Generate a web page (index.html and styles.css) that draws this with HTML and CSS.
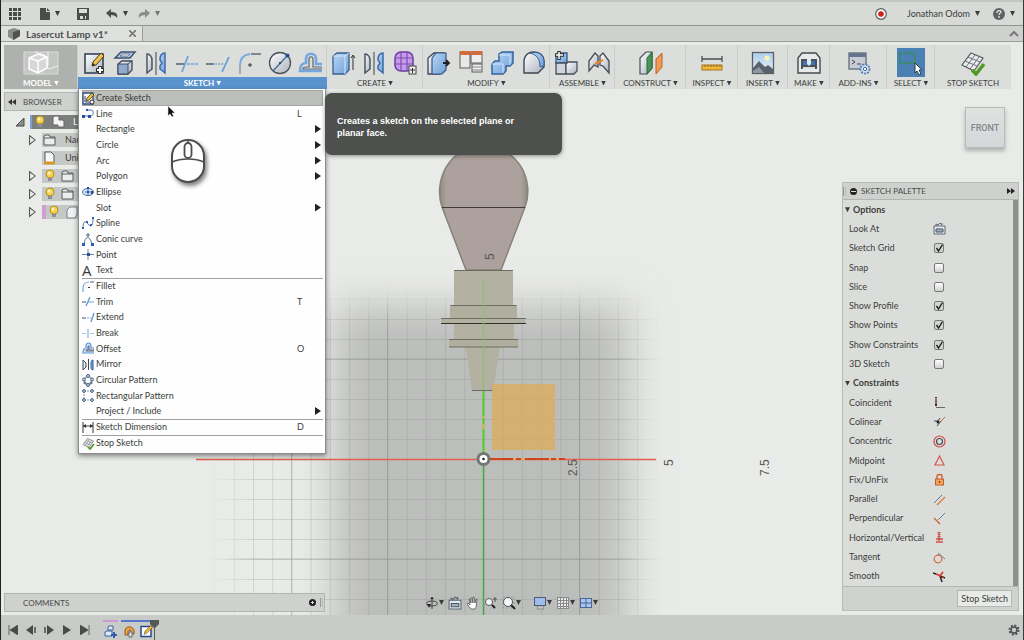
FILE: index.html
```html
<!DOCTYPE html>
<html lang="en">
<head>
<meta charset="utf-8">
<title>Lasercut Lamp v1*</title>
<link rel="stylesheet" href="styles.css">
</head>
<body>
<svg class="defs" aria-hidden="true">
  <defs>
    <linearGradient id="blue" x1="0" y1="0" x2="1" y2="1"><stop offset="0" stop-color="#b9d6f5"/><stop offset="1" stop-color="#6f9fd8"/></linearGradient>
    <linearGradient id="pale" x1="0" y1="0" x2="1" y2="1"><stop offset="0" stop-color="#ffffff"/><stop offset="1" stop-color="#aab2bd"/></linearGradient>
    <linearGradient id="sky" x1="0" y1="0" x2="0" y2="1"><stop offset="0" stop-color="#a9cdee"/><stop offset="1" stop-color="#eef3ee"/></linearGradient>
  </defs>
  <symbol id="i-sketch" viewBox="0 0 26 26"><rect x="4" y="4" width="18" height="19" fill="url(#pale)" stroke="#35435a" stroke-width="1.600"/><path d="M11 16l1-4 8-9 3 3-8 9z" fill="#efc24b" stroke="#4a3d1c"/><path d="M11 16l1-3 2 2z" fill="#222"/><path d="M19 16v8M15 20h8" stroke="#333" stroke-width="4"/><path d="M19 17v6M16 20h6" stroke="#fff" stroke-width="2"/></symbol>
  <symbol id="i-extrude" viewBox="0 0 26 26"><path d="M9 2h14l-5 6H3z" fill="#a9c9ee" stroke="#44536a" stroke-width="1.5"/><path d="M11 4h7l-2 2H8z" fill="#fff" stroke="#44536a" stroke-width=".7"/><path d="M6 14l4-3h10v9l-4 4H6z" fill="url(#pale)" stroke="#3d485a" stroke-width="1.3"/><path d="M6 14h10v10H6z" fill="#8fa9cf" stroke="#3d485a"/><path d="M16 14l4-3" stroke="#3d485a"/></symbol>
  <symbol id="i-mirror" viewBox="0 0 26 26"><path d="M4 4c3 0 5 3 5 6v9l-5 4z" fill="url(#pale)" stroke="#4b5565" stroke-width="1.5"/><path d="M13 2v23" stroke="#555c66" stroke-width="1.2"/><path d="M22 3c-4 0-5 3-5 7l2 3-2 3v3l5 4z" fill="url(#blue)" stroke="#3d6ca8" stroke-width="1.5"/></symbol>
  <symbol id="i-trim" viewBox="0 0 26 26"><path d="M2 14h9" stroke="#475568" stroke-width="1.4"/><path d="M13 14h11" stroke="#6fa3dc" stroke-width="1.6" stroke-dasharray="3 1"/><path d="M14 6L8 22" stroke="#6fa3dc" stroke-width="1.8"/></symbol>
  <symbol id="i-extend" viewBox="0 0 26 26"><path d="M1 14h8" stroke="#475568" stroke-width="1.4"/><path d="M10 14h9" stroke="#6fa3dc" stroke-width="1.5" stroke-dasharray="2 1"/><path d="M24 7l-7 15" stroke="#6fa3dc" stroke-width="1.8"/></symbol>
  <symbol id="i-fillet" viewBox="0 0 26 26"><path d="M15 4h10" stroke="#59616b" stroke-width="1.4"/><path d="M14 4C7 5 4 9 4 15" fill="none" stroke="#7aabe0" stroke-width="2"/><path d="M4 15v9" stroke="#8a929c" stroke-width="1.4"/><path d="M12 15h4M14 13v4" stroke="#333"/></symbol>
  <symbol id="i-circle" viewBox="0 0 26 26"><circle cx="13" cy="13" r="10.5" fill="url(#pale)" stroke="#4b515a" stroke-width="1.3"/><path d="M6 21L20 6" stroke="#4a6e9f" stroke-width="1.4"/><circle cx="20.500" cy="5.500" r="2" fill="#274c9c"/><circle cx="13" cy="13" r="1" fill="#333"/></symbol>
  <symbol id="i-offset" viewBox="0 0 26 26"><path d="M24 14h-6V9c0-7-10-7-10 0v4c-4 0-6 3-6 8h22" fill="none" stroke="#74a7e2" stroke-width="2.600"/><path d="M24 17h-9V9c0-3-4-3-4 0v8H8c-2 0-3 1-3 2h19" fill="#dcdedb" stroke="#5b6470" stroke-width="1.200"/></symbol>
  <symbol id="i-box" viewBox="0 0 26 26"><path d="M3 6l4-3h12v17l-4 4H3z" fill="url(#blue)" stroke="#3b5e8c" stroke-width="1.300"/><path d="M3 6h12v18M15 6l4-3" fill="none" stroke="#dbeafa"/><path d="M23 20V6M21 8l2-3 2 3" fill="none" stroke="#333"/></symbol>
  <symbol id="i-form" viewBox="0 0 26 26"><rect x="3" y="2" width="18" height="19" rx="6" fill="#c59bea" stroke="#6c3ba0" stroke-width="1.500"/><path d="M9 2v19M15 2v19M3 8h18M3 14h18" stroke="#7d4fb4" stroke-width="1.200"/><rect x="17" y="16" width="7" height="8" fill="#eee" stroke="#444"/><path d="M18 20h5M20.500 18v5" stroke="#333"/></symbol>
  <symbol id="i-press" viewBox="0 0 26 26"><path d="M2 8l6-5h10v18l-4 3H2z" fill="url(#pale)" stroke="#3d485a" stroke-width="1.300"/><path d="M6 8l4-5h10v17l-4 4H6z" fill="url(#blue)" stroke="#35577f" stroke-width="1.200"/><path d="M17 13h5M20 10l3 3-3 3" fill="none" stroke="#222" stroke-width="1.800"/></symbol>
  <symbol id="i-table" viewBox="0 0 26 26"><rect x="2" y="2" width="10" height="16" fill="#e8e8e8" stroke="#5f5a58"/><path d="M2 3h10" stroke="#d56a3b" stroke-width="4"/><rect x="13" y="2" width="11" height="11" fill="#eee" stroke="#5f5a58"/><rect x="14" y="14" width="10" height="8" fill="#eee" stroke="#5f5a58"/><path d="M13 3h11" stroke="#d56a3b" stroke-width="4"/><path d="M14 17h9M14 20h9" stroke="#84878a" stroke-width="1.200"/></symbol>
  <symbol id="i-combine" viewBox="0 0 26 26"><path d="M10 4l3-2h11v11l-3 3h-4v5l-3 3H3V14l3-3h4z" fill="url(#blue)" stroke="#3563a0" stroke-width="1.500"/><path d="M3 14h11v9M10 5h11v10" fill="none" stroke="#d6e6f8"/></symbol>
  <symbol id="i-shell" viewBox="0 0 26 26"><path d="M3 23V10c1-5 5-8 10-8 6 0 10 4 10 9v6l-6 6z" fill="url(#pale)" stroke="#3d4654" stroke-width="1.400"/><path d="M9 3c8-2 14 1 14 9v4l-4 1c0-8-3-12-10-14z" fill="url(#blue)" stroke="#355f94"/></symbol>
  <symbol id="i-newcomp" viewBox="0 0 26 26"><path d="M3 13V5l3-2h8v10z" fill="url(#blue)" stroke="#31598e" stroke-width="1.300"/><path d="M3 24V13h10v11z" fill="#cdd5df" stroke="#4a4f58" stroke-width="1.300"/><path d="M13 24V14l2-2h9v9l-3 3z" fill="url(#pale)" stroke="#4a4f58" stroke-width="1.300"/><path d="M6 1v9M2 5h9" stroke="#333" stroke-width="3.500"/><path d="M6 2v7M3 5h7" stroke="#fff" stroke-width="1.500"/></symbol>
  <symbol id="i-joint" viewBox="0 0 26 26"><path d="M3 21V11l6-8 3 3v11l-4-2z" fill="url(#pale)" stroke="#454b54" stroke-width="1.300"/><path d="M14 15V6l3-3 6 8v12l-6-7z" fill="url(#pale)" stroke="#454b54" stroke-width="1.300"/><path d="M9 14l8-4" stroke="#e4852d" stroke-width="2"/></symbol>
  <symbol id="i-plane" viewBox="0 0 26 26"><path d="M2 8l6-6h6v16l-5 6H2z" fill="url(#pale)" stroke="#4a4f50" stroke-width="1.200"/><path d="M9 8l5-6v16l-5 6z" fill="#4a9457" stroke="#2f6b3c"/><path d="M18 9l6-6v14l-6 7z" fill="#ee9b56" stroke="#b9602a"/></symbol>
  <symbol id="i-ruler" viewBox="0 0 26 26"><path d="M3 9h20M3 6v6M23 6v6" stroke="#4b4f53" stroke-width="1.300"/><rect x="3" y="15" width="20" height="5" fill="#f1b73a" stroke="#a8741a"/><path d="M6 15v2M9 15v2M12 15v2M15 15v2M18 15v2M21 15v2" stroke="#8b641d"/></symbol>
  <symbol id="i-image" viewBox="0 0 26 26"><rect x="2.500" y="2.500" width="21" height="21" fill="url(#sky)" stroke="#5a6066" stroke-width="1.300"/><circle cx="17" cy="8" r="2.500" fill="#fff4b5"/><path d="M3 18l6-7 6 6 3-2 5 4v4H3z" fill="#59616d"/><path d="M3 21l6-4 5 6H3z" fill="#8f979f"/></symbol>
  <symbol id="i-make" viewBox="0 0 26 26"><path d="M2 23V8l4-5h14l4 5v15z" fill="#e6e8e9" stroke="#464a4e" stroke-width="1.400"/><path d="M5 9h16v10H5z" fill="#4a5159"/><path d="M7 11h12v4H7z" fill="#3a75b8"/><path d="M11 9h4v5l-2 2-2-2z" fill="#dfe7ee"/><path d="M7 18h12" stroke="#ddd" stroke-width="2"/></symbol>
  <symbol id="i-addins" viewBox="0 0 26 26"><rect x="3" y="3" width="17" height="16" fill="#c7ccd6" stroke="#606a79" stroke-width="1.300"/><path d="M3 5h17" stroke="#65758e" stroke-width="4"/><path d="M6 10l3 2-3 2M11 14h4" fill="none" stroke="#444"/><circle cx="19" cy="19" r="4.500" fill="#dce8f6" stroke="#5b83b5" stroke-width="2" stroke-dasharray="2 1"/><circle cx="19" cy="19" r="1.700" fill="#fff" stroke="#42699c"/></symbol>
  <symbol id="i-select" viewBox="0 0 26 26"><rect x="2" y="3" width="15" height="10" fill="none" stroke="#3c8a64" stroke-width="1.500"/><path d="M17 13v10l2-2 2 4 2-1-2-4h3z" fill="#fff" stroke="#2e3a48"/></symbol>
  <symbol id="i-stop" viewBox="0 0 26 26"><path d="M11 3l12 5-9 13-12-6z" fill="#e9ebee" stroke="#575d63" stroke-width="1.200"/><path d="M15 5l-9 12M19 7l-9 12M8 7l12 5M5 11l12 5" stroke="#6b7178"/><path d="M12 20l4 4 8-10" fill="none" stroke="#4e9a24" stroke-width="3.500"/></symbol>
  <symbol id="i-model" viewBox="0 0 36 24"><path d="M1 1h34v22H1z" fill="#c4c6c4" stroke="#dcdddc"/><path d="M12 1l10 3v10l4 4 9-3M25 1v14" fill="none" stroke="#f2f2f2"/><path d="M6 7l9-4 9 3v11l-9 5-9-4z" fill="#d6d8d6" stroke="#fff" stroke-width="1.500"/><path d="M6 7l9 3 9-4M15 10v12" fill="none" stroke="#fff" stroke-width="1.500"/></symbol>

  <symbol id="m-sketch" viewBox="0 0 13 13"><path d="M1 1h10v11H1z" fill="#f3f5f8" stroke="#35507f" stroke-width="1.300"/><path d="M4 9l1-3 5-5 2 2-5 5z" fill="#efb93a" stroke="#4a3d1c" stroke-width=".8"/><path d="M3 4v6h5" fill="none" stroke="#35507f"/><circle cx="10" cy="10" r="2" fill="#fff" stroke="#333"/></symbol>
  <symbol id="m-fillet" viewBox="0 0 13 13"><path d="M1 12V8C1 4 4 2 7 2" fill="none" stroke="#6fa3dc" stroke-width="1.200"/><path d="M8 2h4" stroke="#59616b"/><path d="M6 7h2v1H6z" fill="#333"/></symbol>
  <symbol id="m-trim" viewBox="0 0 13 13"><path d="M0 7h4" stroke="#475568"/><path d="M6 7h6" stroke="#6fa3dc"/><path d="M8 2L4 11" stroke="#5c97da" stroke-width="1.300"/></symbol>
  <symbol id="m-extend" viewBox="0 0 13 13"><path d="M0 7h4" stroke="#475568"/><path d="M5 7h4" stroke="#6fa3dc" stroke-dasharray="2 1"/><path d="M12 2L9 11" stroke="#5c97da" stroke-width="1.300"/></symbol>
  <symbol id="m-offset" viewBox="0 0 13 13"><path d="M12 6H9V4c0-4-5-4-5 0v2C2 6 1 8 1 11h11" fill="#cfe2f6" stroke="#5c97da" stroke-width="1.200"/><path d="M12 8H7V4H6v4H4v1h8" fill="none" stroke="#4b5460" stroke-width=".8"/></symbol>
  <symbol id="m-mirror" viewBox="0 0 13 13"><path d="M1 2l3 3v4l-3 3zM6.500 1v11" fill="#e8ecf1" stroke="#3f4a5a"/><path d="M11 2c-2 0-2 2-2 5s0 5 2 5z" fill="#7fabdf" stroke="#355f94"/></symbol>
  <symbol id="m-line" viewBox="0 0 13 13"><path d="M1 9h5M5 3h4c3 0 3 5 0 6H7" fill="none" stroke="#4671b8"/><path d="M0 8h3v3H0zM6 8h3v3H6zM4 2h2v2H4z" fill="#2e4f9c"/></symbol>
  <symbol id="m-ellipse" viewBox="0 0 13 13"><ellipse cx="6" cy="6" rx="5.500" ry="3.500" fill="#dbe8f7" stroke="#4a6d9c"/><path d="M6 2v8M3 6h7" stroke="#4671b8"/><path d="M5 5h2v2H5zM9 5h2v3H9zM5 1h2v2H5z" fill="#2e4f9c"/></symbol>
  <symbol id="m-spline" viewBox="0 0 13 13"><path d="M1 11c0-9 4-6 5-4 3 4 5 2 5-6" fill="none" stroke="#5c7494"/><path d="M0 10h2v2H0zM4 4h2v2H4zM8 7h2v2H8zM10 0h2v2h-2z" fill="#2e5fb4"/></symbol>
  <symbol id="m-conic" viewBox="0 0 13 13"><path d="M2 12C3 2 8 2 10 12M6 0v4M4 2h4" fill="none" stroke="#566679"/><path d="M0 10h3v3H0zM9 10h3v3H9z" fill="#2e5fb4"/></symbol>
  <symbol id="m-point" viewBox="0 0 13 13"><path d="M6 1v11M0 6.500h12" stroke="#6e86a6"/><path d="M5 5h3v3H5z" fill="#2e4f9c"/></symbol>
  <symbol id="m-break" viewBox="0 0 13 13"><path d="M0 6.500h4M8 6.500h4" stroke="#a9c8e8"/><path d="M6 2v9" stroke="#6fa3dc"/></symbol>
  <symbol id="m-circ" viewBox="0 0 13 13"><circle cx="6" cy="6.500" r="4" fill="none" stroke="#7c91ab"/><g fill="#c7dcf3" stroke="#3f597c"><circle cx="6" cy="2" r="1.500"/><circle cx="2" cy="5.500" r="1.500"/><circle cx="10" cy="5.500" r="1.500"/><circle cx="6" cy="11" r="1.500"/><circle cx="3" cy="9" r="1"/><circle cx="9" cy="9" r="1"/></g></symbol>
  <symbol id="m-rect" viewBox="0 0 13 13"><path d="M2 2h8M2 11h8M2 2v9" stroke="#7c91ab" stroke-dasharray="2 1" fill="none"/><g fill="#c7dcf3" stroke="#3f597c"><circle cx="2" cy="2" r="1.400"/><circle cx="10" cy="2" r="1.400"/><circle cx="2" cy="11" r="1.400"/><circle cx="10" cy="11" r="1.400"/></g></symbol>
  <symbol id="m-dim" viewBox="0 0 13 13"><path d="M1 1v11M11 1v11M1 5h10" stroke="#333" fill="none"/><path d="M1 5l3-2v4zM11 5L8 3v4z" fill="#333"/></symbol>

  <symbol id="t-bulb" viewBox="0 0 12 14"><circle cx="6" cy="5" r="4" fill="#f5d254" stroke="#b88f20"/><circle cx="5" cy="4" r="1.500" fill="#fff6c4"/><path d="M4 9h4v3H4z" fill="#8a8f98"/></symbol>
  <symbol id="t-folder" viewBox="0 0 14 14"><path d="M1 12V3l2-1h3l1 2h5v8z" fill="#eceeee" stroke="#555b60"/><path d="M1 5h11" stroke="#555b60"/></symbol>
  <symbol id="t-doc" viewBox="0 0 14 14"><path d="M2 1h6l3 3v8H2z" fill="#f8f8f8" stroke="#555b60"/><path d="M1 12h11" stroke="#d49a2c" stroke-width="3"/></symbol>
  <symbol id="t-comp" viewBox="0 0 14 14"><path d="M2 10V2l2-1h4v4h4l1 1v6H7v-2z" fill="#f2f3f3" stroke="#666"/></symbol>
  <symbol id="t-body" viewBox="0 0 14 14"><path d="M2 5l3-3h7v7l-2 4H2z" fill="#eff1f2" stroke="#7b8188"/></symbol>

  <symbol id="c-look" viewBox="0 0 13 13"><path d="M1 4h11v8H1z" fill="#e4e9ee" stroke="#5d6874"/><path d="M3 7h7v3H3z" fill="#9fb0c2" stroke="#4b5763"/><path d="M3 4V2l2 1 2-2 2 2V1" fill="none" stroke="#5d6874"/></symbol>
  <symbol id="c-coin" viewBox="0 0 13 13"><path d="M3 1v9" stroke="#c9564a"/><path d="M3 3v5" stroke="#333"/><path d="M2 8h2v2H2zM2 1h2v1H2z" fill="#333"/><path d="M3 11.500h9" stroke="#666"/></symbol>
  <symbol id="c-colin" viewBox="0 0 13 13"><path d="M1 6h4l2-3M4 11l5-6" stroke="#444" fill="none"/><path d="M8 6l4-4" stroke="#d0622e"/><circle cx="5" cy="7" r="1.500" fill="#222"/></symbol>
  <symbol id="c-conc" viewBox="0 0 13 13"><circle cx="6.500" cy="6.500" r="5.500" fill="none" stroke="#d2443a" stroke-width="1.200"/><circle cx="6.500" cy="6.500" r="3" fill="none" stroke="#444c58" stroke-width="1.200"/></symbol>
  <symbol id="c-mid" viewBox="0 0 13 13"><path d="M6.500 2l4.500 9H2z" fill="none" stroke="#d3584e" stroke-width="1.200"/></symbol>
  <symbol id="c-fix" viewBox="0 0 13 13"><path d="M4 6V3c0-2 5-2 5 0v3" fill="none" stroke="#c85a28" stroke-width="1.300"/><rect x="2.500" y="6" width="8" height="6" fill="#f0a860" stroke="#c85a28"/><path d="M6.500 8v2" stroke="#a03c18" stroke-width="1.500"/></symbol>
  <symbol id="c-par" viewBox="0 0 13 13"><path d="M1 10l8-8" stroke="#6b7078"/><path d="M4 12l8-8" stroke="#d9793a" stroke-width="1.200"/></symbol>
  <symbol id="c-perp" viewBox="0 0 13 13"><path d="M5 8l7-7" stroke="#6a7a9a"/><path d="M1 6l6 6" stroke="#d4632a" stroke-width="1.200"/></symbol>
  <symbol id="c-hv" viewBox="0 0 13 13"><path d="M6 1v7" stroke="#cc5048" stroke-width="3" stroke-dasharray="1 1"/><path d="M6 1v9M3 8h7M3 11h7" stroke="#cc5048" stroke-width="1.300"/></symbol>
  <symbol id="c-tan" viewBox="0 0 13 13"><circle cx="5" cy="8" r="3.800" fill="none" stroke="#cf6a3a" stroke-width="1.200"/><path d="M5 2l7 6" stroke="#777"/></symbol>
  <symbol id="c-smooth" viewBox="0 0 13 13"><path d="M0 3l3 1M7 6l5 2M7 6l2 6" stroke="#222" stroke-width="1.500" fill="none"/><path d="M3 4l5 2M7 6l3-4M9 7h2" stroke="#d9352a" stroke-width="1.600"/></symbol>

  <symbol id="n-orbit" viewBox="0 0 14 14"><path d="M7 1v12" stroke="#444"/><ellipse cx="7" cy="7.500" rx="5.500" ry="2.500" fill="none" stroke="#444"/><path d="M2 8l4 0-2 4zM7 1l2 2H5z" fill="#222"/></symbol>
  <symbol id="n-hand" viewBox="0 0 14 14"><path d="M5 13L1 8l1-1 2 2-1-6 1 0 1 4V2h1l1 5V1h1l1 6 1-4 1 0-1 8-1 2z" fill="#fff" stroke="#555" stroke-width=".8"/></symbol>
  <symbol id="n-zoom" viewBox="0 0 14 14"><circle cx="5" cy="6" r="3.500" fill="#f2f6f8" stroke="#555"/><path d="M8 9l3 3" stroke="#222" stroke-width="2"/><path d="M9 3h4M11 1v5" stroke="#555"/></symbol>
  <symbol id="n-fit" viewBox="0 0 14 14"><path d="M1 1h11v11H1z" fill="none" stroke="#999" stroke-dasharray="2 2"/><circle cx="6" cy="6" r="4.500" fill="#f2f6f8" stroke="#555"/><path d="M9 9l4 4" stroke="#222" stroke-width="2"/></symbol>
  <symbol id="n-display" viewBox="0 0 14 14"><rect x="1.500" y="1.500" width="11" height="8" fill="#9dbdea" stroke="#4d5a6b"/><path d="M5 10h5l1 3H4z" fill="#c8caca" stroke="#777" stroke-width=".7"/></symbol>
  <symbol id="n-grid" viewBox="0 0 14 14"><rect x="1" y="1" width="12" height="12" fill="#e8eaea"/><path d="M1.500 1v12M4.500 1v12M7.500 1v12M10.500 1v12M12.500 1v12M1 1.500h12M1 4.500h12M1 7.500h12M1 10.500h12M1 12.500h12" stroke="#8a8a8a"/></symbol>
  <symbol id="n-views" viewBox="0 0 14 14"><rect x="1.500" y="2.500" width="11" height="9" fill="#a8c6ef" stroke="#4a6796"/><path d="M7 2v10M1 7h12" stroke="#4a6796"/></symbol>
  <symbol id="g-gear" viewBox="0 0 12 12"><circle cx="6" cy="6" r="4.500" fill="none" stroke="#4d5150" stroke-width="2" stroke-dasharray="2 1.500"/><circle cx="6" cy="6" r="3" fill="none" stroke="#4d5150" stroke-width="1.500"/></symbol>
</svg>

<div class="app">
  <header class="titlebar">
    <button class="flat" aria-label="Data panel"><svg width="12" height="12" viewBox="0 0 12 12"><path d="M0 0h3v3H0zM4 0h4v3H4zM9 0h3v3H9zM0 4h3v4H0zM4 4h4v4H4zM9 4h3v4H9zM0 9h3v3H0zM4 9h4v3H4zM9 9h3v3H9z" fill="#4b4d4b"/></svg></button>
    <button class="flat file" aria-label="File"><svg width="10" height="12" viewBox="0 0 10 12"><path d="M0 0h6v4h4v8H0zM7 0l3 3H7z" fill="#4b4d4b"/></svg><i class="caret"></i></button>
    <button class="flat save" aria-label="Save"><svg width="12" height="12" viewBox="0 0 12 12"><path d="M0 0h12v12H0z" fill="#4b4d4b"/><path d="M2 1h8v4H2zM3 8h6v3H3z" fill="#dcdedb"/><path d="M6 8h2v3H6z" fill="#4b4d4b"/></svg></button>
    <button class="flat undo" aria-label="Undo"><svg width="12" height="10" viewBox="0 0 12 10"><path d="M5 0v3c5 0 7 2 6 6-1-2-3-3-6-3v3L0 4z" fill="#4b4d4b"/></svg><i class="caret"></i></button>
    <button class="flat redo" aria-label="Redo"><svg width="12" height="10" viewBox="0 0 12 10"><path d="M7 0v3C2 3 0 5 1 9c1-2 3-3 6-3v3l5-5z" fill="#8b8d8b"/></svg><i class="caret"></i></button>
    <button class="flat record" aria-label="Record"><svg width="12" height="12" viewBox="0 0 12 12"><circle cx="6" cy="6" r="5.300" fill="#fff" stroke="#575a58" stroke-width="1.200"/><circle cx="6" cy="6" r="2.800" fill="#cf2413"/></svg></button>
    <button class="flat user">Jonathan Odom<i class="caret"></i></button>
    <button class="flat" aria-label="Help"><svg width="12" height="12" viewBox="0 0 12 12"><circle cx="6" cy="6" r="6" fill="#5f6260"/><path d="M4 5c0-3 4-3 4-1 0 1-2 1-2 3M6 8v2" fill="none" stroke="#e0e1e0" stroke-width="1.300"/></svg><i class="caret"></i></button>
  </header>

  <nav class="tabs" aria-label="Documents">
    <div class="tab">
      <svg width="12" height="12" viewBox="0 0 12 12"><path d="M0 2l6-2 6 2v6l-6 4-6-3z" fill="#8b8d8b"/><path d="M5 4l7-2v6l-7 4z" fill="#515351"/></svg>
      <a href="#doc">Lasercut Lamp v1*</a>
      <button class="flat close" aria-label="Close"><svg width="7" height="7" viewBox="0 0 7 7"><path d="M0 0l7 7M7 0L0 7" stroke="#777" stroke-width="1.600"/></svg></button>
    </div>
    <button class="flat collapse" aria-label="Collapse"><svg width="10" height="6" viewBox="0 0 10 6"><path d="M1 5l4-4 4 4" fill="none" stroke="#777" stroke-width="2"/></svg></button>
  </nav>

  <main class="workspace" id="doc">
    <svg class="scene" viewBox="0 42 1024 573" preserveAspectRatio="xMidYMid slice" aria-label="Model view">
      <defs>
        <filter id="soft" x="-30%" y="-30%" width="160%" height="160%"><feGaussianBlur stdDeviation="20"/></filter>
        <filter id="fade" x="-30%" y="-30%" width="160%" height="160%"><feGaussianBlur stdDeviation="14"/></filter>
        <mask id="gridmask" maskUnits="userSpaceOnUse" x="150" y="200" width="560" height="500"><rect x="232" y="308" width="408" height="420" fill="#fff" filter="url(#fade)"/></mask>
        <pattern id="minor" patternUnits="userSpaceOnUse" x="483.500" y="459" width="19.200" height="20"><path d="M0 0v20M0 0h20" stroke="#858985" stroke-width="1" fill="none"/></pattern>
        <linearGradient id="glass" x1="0" y1="0" x2="1" y2="0"><stop offset="0" stop-color="#8f8c80"/><stop offset=".08" stop-color="#aca19c"/><stop offset=".92" stop-color="#aca19c"/><stop offset="1" stop-color="#8f8c80"/></linearGradient>
      </defs>
      <rect x="334" y="306" width="294" height="380" fill="#bcbebc" filter="url(#soft)"/>
      <g mask="url(#gridmask)">
        <rect x="150" y="200" width="560" height="460" fill="url(#minor)" opacity=".5"/>
        <path d="M291.500 200v460M387.500 200v460M579.500 200v460M150 359h560M150 559h560" stroke="#747974" stroke-width="1" opacity=".35"/>
      </g>
      <path d="M466 270L442 207C433 181 449 146 483.500 146S535 181 525 207L501 270z" fill="url(#glass)" stroke="#85837a" stroke-width="1.500"/>
      <path d="M442 207.500h83" stroke="#3f3c39" stroke-width="1.200"/>
      <path d="M454 270h59v36h4v12h8v6h-11v15h4v8h-18l-7 44h-21l-6-44h-17v-8h5v-15h-13v-6h9v-12h4z" fill="#b3b1a1"/>
      <path d="M450 306v12h67v-12zM449 339v8h69v-8z" fill="#b0ae9d"/>
      <path d="M454 270.500h59M450.500 305.500h66M441 318.500h85M449 339.500h69M449 347h69M472 390.500h21" stroke="#6d6c62" fill="none"/>
      <path d="M441 323.500h85" stroke="#2e2e2a" stroke-width="1.200"/>
      <rect x="492" y="384" width="63" height="66" fill="#e0a94e" opacity=".68"/>
      <path d="M196 459.500h460" stroke="#e0604c" stroke-width="1.500"/>
      <path d="M483.500 280v110" stroke="#7cc56d" stroke-width="1.500" opacity=".7"/>
      <path d="M483.500 459v156" stroke="#3fae3c" stroke-width="1.500"/>
      <path d="M483.500 391v68" stroke="#4fce20" stroke-width="2"/>
      <path d="M483.500 416v2M483.500 424v5" stroke="#d3b964" stroke-width="2"/>
      <path d="M484 459h81" stroke="#d2421c" stroke-width="2"/>
      <path d="M513 459h3M521 459h4M549 459h2M556 459h3" stroke="#ddaa68" stroke-width="2"/>
      <circle cx="483.500" cy="459" r="5.500" fill="#fff" stroke="#737774" stroke-width="3"/><circle cx="483.500" cy="459" r="1.300" fill="#222"/>
      <g class="axis">
        <text transform="translate(577 476) rotate(-90)">2.5</text>
        <text transform="translate(673 466) rotate(-90)">5</text>
        <text transform="translate(769 476) rotate(-90)">7.5</text>
        <text transform="translate(494 260) rotate(-90)">5</text>
      </g>
    </svg>

    <div class="toolbar">
      <button class="group model"><span class="tools"><svg width="36" height="24"><use href="#i-model"/></svg></span><span class="label">MODEL<i class="caret"></i></span></button>
      <div class="group sketch">
        <div class="tools">
          <button class="tool" aria-label="Create Sketch"><svg><use href="#i-sketch"/></svg></button>
          <button class="tool" aria-label="Project"><svg><use href="#i-extrude"/></svg></button>
          <button class="tool" aria-label="Mirror"><svg><use href="#i-mirror"/></svg></button>
          <button class="tool" aria-label="Trim"><svg><use href="#i-trim"/></svg></button>
          <button class="tool" aria-label="Extend"><svg><use href="#i-extend"/></svg></button>
          <button class="tool" aria-label="Fillet"><svg><use href="#i-fillet"/></svg></button>
          <button class="tool" aria-label="Circle"><svg><use href="#i-circle"/></svg></button>
          <button class="tool" aria-label="Offset"><svg><use href="#i-offset"/></svg></button>
        </div>
        <button class="label">SKETCH<i class="caret"></i></button>

        <div class="menu">
          <ul>
            <li class="on"><button><svg><use href="#m-sketch"/></svg>Create Sketch</button></li>
            <li><button><svg><use href="#m-line"/></svg>Line<kbd>L</kbd></button></li>
            <li><button><svg></svg>Rectangle<i class="sub"></i></button></li>
            <li><button><svg></svg>Circle<i class="sub"></i></button></li>
            <li><button><svg></svg>Arc<i class="sub"></i></button></li>
            <li><button><svg></svg>Polygon<i class="sub"></i></button></li>
            <li><button><svg><use href="#m-ellipse"/></svg>Ellipse</button></li>
            <li><button><svg></svg>Slot<i class="sub"></i></button></li>
            <li><button><svg><use href="#m-spline"/></svg>Spline</button></li>
            <li><button><svg><use href="#m-conic"/></svg>Conic curve</button></li>
            <li><button><svg><use href="#m-point"/></svg>Point</button></li>
            <li><button><b class="glyph">A</b>Text</button></li>
          </ul>
          <ul>
            <li><button><svg><use href="#m-fillet"/></svg>Fillet</button></li>
            <li><button><svg><use href="#m-trim"/></svg>Trim<kbd>T</kbd></button></li>
            <li><button><svg><use href="#m-extend"/></svg>Extend</button></li>
            <li><button><svg><use href="#m-break"/></svg>Break</button></li>
            <li><button><svg><use href="#m-offset"/></svg>Offset<kbd>O</kbd></button></li>
            <li><button><svg><use href="#m-mirror"/></svg>Mirror</button></li>
            <li><button><svg><use href="#m-circ"/></svg>Circular Pattern</button></li>
            <li><button><svg><use href="#m-rect"/></svg>Rectangular Pattern</button></li>
            <li><button><svg></svg>Project / Include<i class="sub"></i></button></li>
          </ul>
          <ul><li><button><svg><use href="#m-dim"/></svg>Sketch Dimension<kbd>D</kbd></button></li></ul>
          <ul><li><button><svg><use href="#i-stop"/></svg>Stop Sketch</button></li></ul>
          <svg class="mouse" width="42" height="52" viewBox="0 0 42 52"><rect x="5" y="3" width="32" height="42" rx="16" fill="#fff" stroke="#4c4e4c" stroke-width="2"/><path d="M5 25c9-4 23-4 32 0M21 3v3" fill="none" stroke="#4c4e4c" stroke-width="1.500"/><rect x="17.500" y="6" width="7" height="15" rx="3.500" fill="#fff" stroke="#4c4e4c" stroke-width="1.800"/></svg>
          <svg class="pointer" width="8" height="13" viewBox="0 0 8 13"><path d="M1 1v10l2-2 2 3 1.500-1L5 8h3z" fill="#111" stroke="#ddd" stroke-width=".6"/></svg>
          <p class="tip" role="tooltip">Creates a sketch on the selected plane or planar face.</p>
        </div>
      </div>
      <div class="group create"><div class="tools">
        <button class="tool" aria-label="Extrude"><svg><use href="#i-box"/></svg></button>
        <button class="tool" aria-label="Mirror body"><svg><use href="#i-mirror"/></svg></button>
        <button class="tool" aria-label="Create Form"><svg><use href="#i-form"/></svg></button>
      </div><button class="label">CREATE<i class="caret"></i></button></div>
      <div class="group modify"><div class="tools">
        <button class="tool" aria-label="Press Pull"><svg><use href="#i-press"/></svg></button>
        <button class="tool" aria-label="Parameters"><svg><use href="#i-table"/></svg></button>
        <button class="tool" aria-label="Combine"><svg><use href="#i-combine"/></svg></button>
        <button class="tool" aria-label="Shell"><svg><use href="#i-shell"/></svg></button>
      </div><button class="label">MODIFY<i class="caret"></i></button></div>
      <div class="group assemble"><div class="tools">
        <button class="tool" aria-label="New Component"><svg><use href="#i-newcomp"/></svg></button>
        <button class="tool" aria-label="Joint"><svg><use href="#i-joint"/></svg></button>
      </div><button class="label">ASSEMBLE<i class="caret"></i></button></div>
      <div class="group construct"><div class="tools"><button class="tool" aria-label="Offset Plane"><svg><use href="#i-plane"/></svg></button></div><button class="label">CONSTRUCT<i class="caret"></i></button></div>
      <div class="group inspect"><div class="tools"><button class="tool" aria-label="Measure"><svg><use href="#i-ruler"/></svg></button></div><button class="label">INSPECT<i class="caret"></i></button></div>
      <div class="group insert"><div class="tools"><button class="tool" aria-label="Insert image"><svg><use href="#i-image"/></svg></button></div><button class="label">INSERT<i class="caret"></i></button></div>
      <div class="group make"><div class="tools"><button class="tool" aria-label="3D Print"><svg><use href="#i-make"/></svg></button></div><button class="label">MAKE<i class="caret"></i></button></div>
      <div class="group addins"><div class="tools"><button class="tool" aria-label="Scripts"><svg><use href="#i-addins"/></svg></button></div><button class="label">ADD-INS<i class="caret"></i></button></div>
      <div class="group select"><div class="tools"><button class="tool active" aria-label="Select tool"><svg><use href="#i-select"/></svg></button></div><button class="label">SELECT<i class="caret"></i></button></div>
      <div class="group stop"><div class="tools"><button class="tool" aria-label="Finish"><svg><use href="#i-stop"/></svg></button></div><button class="label">STOP SKETCH</button></div>
    </div>

    <aside class="browser">
      <h2 class="bar"><svg width="8" height="6" viewBox="0 0 8 6"><path d="M4 0v6L0 3zM8 0v6L4 3z" fill="#333"/></svg>BROWSER</h2>
      <ul class="tree">
        <li class="root"><svg width="10" height="10" viewBox="0 0 10 10"><path d="M9 1v8H1z" fill="#8d8f8d" stroke="#444"/></svg><span><svg><use href="#t-bulb"/></svg><svg><use href="#t-comp"/></svg>L</span></li>
        <li><i class="open"></i><span><svg><use href="#t-folder"/></svg>Nam</span></li>
        <li><i class="none"></i><span><svg><use href="#t-doc"/></svg>Uni</span></li>
        <li><i class="open"></i><span><svg><use href="#t-bulb"/></svg><svg><use href="#t-folder"/></svg></span></li>
        <li><i class="open"></i><span><svg><use href="#t-bulb"/></svg><svg><use href="#t-folder"/></svg></span></li>
        <li><i class="open"></i><span class="pink"><svg><use href="#t-bulb"/></svg><svg><use href="#t-body"/></svg></span></li>
      </ul>
    </aside>

    <div class="right">
      <div class="cube-area"><button class="cube">FRONT</button></div>
      <section class="palette">
        <h2 class="bar"><i class="grip"></i><svg width="7" height="7" viewBox="0 0 7 7"><circle cx="3.500" cy="3.500" r="3.500" fill="#222"/><path d="M1 3.500h5" stroke="#ddd"/></svg>SKETCH PALETTE<svg class="end" width="8" height="6" viewBox="0 0 8 6"><path d="M0 0v6l4-3zM4 0v6l4-3z" fill="#222"/></svg></h2>
        <div class="rows">
          <h3><i class="caret"></i>Options</h3>
          <button class="row">Look At<svg><use href="#c-look"/></svg></button>
          <label class="row">Sketch Grid<input type="checkbox" checked></label>
          <label class="row">Snap<input type="checkbox"></label>
          <label class="row">Slice<input type="checkbox"></label>
          <label class="row">Show Profile<input type="checkbox" checked></label>
          <label class="row">Show Points<input type="checkbox" checked></label>
          <label class="row">Show Constraints<input type="checkbox" checked></label>
          <label class="row">3D Sketch<input type="checkbox"></label>
          <h3><i class="caret"></i>Constraints</h3>
          <button class="row">Coincident<svg><use href="#c-coin"/></svg></button>
          <button class="row">Colinear<svg><use href="#c-colin"/></svg></button>
          <button class="row">Concentric<svg><use href="#c-conc"/></svg></button>
          <button class="row">Midpoint<svg><use href="#c-mid"/></svg></button>
          <button class="row">Fix/UnFix<svg><use href="#c-fix"/></svg></button>
          <button class="row">Parallel<svg><use href="#c-par"/></svg></button>
          <button class="row">Perpendicular<svg><use href="#c-perp"/></svg></button>
          <button class="row">Horizontal/Vertical<svg><use href="#c-hv"/></svg></button>
          <button class="row">Tangent<svg><use href="#c-tan"/></svg></button>
          <button class="row">Smooth<svg><use href="#c-smooth"/></svg></button>
        </div>
        <footer><button class="finish">Stop Sketch</button></footer>
      </section>
    </div>

    <h2 class="bar comments">COMMENTS<svg width="7" height="7" viewBox="0 0 7 7"><circle cx="3.500" cy="3.500" r="3.500" fill="#222"/><path d="M2 3.500h3M3.500 2v3" stroke="#ddd"/></svg><i class="grip"></i></h2>

    <div class="viewbar">
      <button class="flat" aria-label="Orbit"><svg><use href="#n-orbit"/></svg><i class="caret"></i></button>
      <button class="flat" aria-label="Look At view"><svg><use href="#c-look"/></svg></button>
      <button class="flat" aria-label="Pan"><svg><use href="#n-hand"/></svg></button>
      <button class="flat" aria-label="Zoom"><svg><use href="#n-zoom"/></svg></button>
      <button class="flat" aria-label="Fit"><svg><use href="#n-fit"/></svg><i class="caret"></i></button>
      <button class="flat display" aria-label="Display settings"><svg><use href="#n-display"/></svg><i class="caret"></i></button>
      <button class="flat" aria-label="Grid settings"><svg><use href="#n-grid"/></svg><i class="caret"></i></button>
      <button class="flat" aria-label="Viewports"><svg><use href="#n-views"/></svg><i class="caret"></i></button>
    </div>
  </main>

  <footer class="timeline">
    <button class="flat" aria-label="Start"><svg width="10" height="10" viewBox="0 0 10 10"><path d="M1 0v10M10 0v10L2 5z" fill="#484b48" stroke="#484b48" stroke-width=".8"/></svg></button>
    <button class="flat" aria-label="Step back"><svg width="10" height="10" viewBox="0 0 10 10"><path d="M7 0v10L0 5z" fill="#484b48"/><path d="M9 2v6" stroke="#484b48" stroke-width="1.500"/></svg></button>
    <button class="flat" aria-label="Step forward"><svg width="10" height="10" viewBox="0 0 10 10"><path d="M3 0v10l7-5z" fill="#484b48"/><path d="M1 2v6" stroke="#484b48" stroke-width="1.500"/></svg></button>
    <button class="flat" aria-label="Play"><svg width="10" height="10" viewBox="0 0 10 10"><path d="M1 0v10l8-5z" fill="#484b48"/></svg></button>
    <button class="flat" aria-label="End"><svg width="10" height="10" viewBox="0 0 10 10"><path d="M9 0v10M0 0v10l8-5z" fill="#484b48" stroke="#484b48" stroke-width=".8"/></svg></button>
    <div class="features">
      <button class="flat f1" aria-label="Component"><svg width="13" height="13" viewBox="0 0 13 13"><path d="M1 11V7l2-1h5v5zM4 5V2l1-1h4v4z" fill="#dce9f8" stroke="#3c5f9c"/><path d="M10 7v6M7 10h6" stroke="#2f5cb0" stroke-width="2"/></svg></button>
      <button class="flat f2" aria-label="Revolve"><svg width="13" height="13" viewBox="0 0 13 13"><path d="M2 10V6c0-6 9-5 9 0v3H8V6c0-2-3-1-3 1v3z" fill="#e9a445" stroke="#8c5b24"/><path d="M6 7h3v5H6z" fill="#eee" stroke="#666"/></svg></button>
      <button class="flat f2" aria-label="Sketch"><svg width="13" height="13" viewBox="0 0 26 26"><rect x="2" y="3" width="20" height="20" fill="#fff" stroke="#274a8a" stroke-width="3"/><path d="M8 19l2-7L22 1l3 4-11 11z" fill="#efb93a" stroke="#4a3d1c"/></svg></button>
      <svg class="marker" width="9" height="20" viewBox="0 0 9 20"><path d="M0 0h9v4L5 8v12H4V8L0 4z" fill="#555855"/></svg>
    </div>
    <button class="flat settings" aria-label="Settings"><svg width="12" height="12"><use href="#g-gear"/></svg></button>
  </footer>
</div>
</body>
</html>
```
FILE: styles.css
```css
* { box-sizing: border-box; }
html, body { height: 100%; }
body {
  margin: 0;
  font: 9px/12px Lato, "Open Sans", sans-serif;
  color: #3b3d3b;
  background: #e9ebe8;
}
.defs { position: absolute; width: 0; height: 0; }
svg { display: block; flex: none; }
button { font: inherit; color: inherit; background: none; border: 0; padding: 0; text-align: left; }
ul, h2, h3, p { margin: 0; padding: 0; list-style: none; font: inherit; }
a { color: inherit; text-decoration: none; }
.flat { display: flex; align-items: center; gap: 3px; }
.caret {
  flex: none; width: 5px; height: 5px; margin-left: 2px;
  background: currentColor; clip-path: polygon(0 0, 100% 0, 50% 100%);
}
.app {
  display: flex; flex-direction: column; min-height: 100vh;
  border-left: 1px solid #222; border-right: 1px solid #3a3a3a;
}

.titlebar {
  display: flex; align-items: center; gap: 20px; height: 26px; padding: 3px 8px 1px;
  background: #d8dad7; border-bottom: 1px solid #929492; box-shadow: inset 0 2px #c4c6c4;
}
.titlebar .save { margin-left: -3px; }
.titlebar .file { margin-left: -1px; }
.titlebar .undo { margin-left: -3px; }
.titlebar .redo { margin-left: -10px; color: #777; }
.record { margin-left: auto; }
.user { gap: 3px; margin-right: -7px; }

.tabs {
  display: flex; align-items: stretch; height: 16px;
  background: #cfd1ce; border-bottom: 1px solid #9c9e9c;
}
.tab {
  display: flex; align-items: center; gap: 6px; width: 142px; padding: 0 6px 0 7px;
  font-size: 10px; font-weight: 700; color: #4d4f4d; background: #dfe1de; border-right: 1px solid #9c9e9c;
}
.close { margin-left: auto; }
.collapse { margin-left: auto; padding-right: 4px; }

.workspace {
  position: relative; flex: 1; display: grid;
  grid-template-columns: 321px 1fr 177px;
  grid-template-rows: auto 1fr auto;
  padding: 3px 4px 3px 3px;
  background: #e9ebe8;
}
.scene { position: absolute; inset: 0; width: 100%; height: 100%; }
.axis { font: 12px "Liberation Sans", sans-serif; fill: #555855; }

.toolbar {
  position: relative; z-index: 2; grid-column: 1 / -1;
  display: flex; height: 44px; margin-right: 8px; background: #dcdedb;
}
.group {
  position: relative; display: flex; flex-direction: column; min-width: 0;
  padding: 3px 0 0; box-shadow: inset -1px 0 #cbcdca;
}
.tools { flex: 1; display: flex; justify-content: center; align-items: center; }
.create .tools, .modify .tools, .assemble .tools { justify-content: space-around; }
.create .tools { padding-right: 2px; }
.tool { width: 28px; height: 29px; display: grid; place-items: center; }
.tool svg { width: 26px; height: 26px; }
.active { background: #4a80b4; }
.label {
  display: flex; justify-content: center; align-items: center;
  height: 12px; font-size: 8px; line-height: 12px; white-space: nowrap;
}
.model { flex: 74 1 0; background: #afb1af; color: #fff; font-weight: 700; }
.sketch { flex: 249 1 0; }
.sketch .tools { justify-content: space-around; padding: 0 1px; }
.sketch .label { background: #5a94ce; color: #fff; font-weight: 700; }
.create { flex: 96 1 0; }
.modify { flex: 127 1 0; }
.assemble { flex: 65 1 0; }
.construct { flex: 71 1 0; }
.inspect { flex: 52 1 0; }
.insert { flex: 50 1 0; }
.make { flex: 42 1 0; }
.addins { flex: 57 1 0; }
.select { flex: 48 1 0; }
.stop { flex: 76 1 0; box-shadow: none; }

.menu {
  position: absolute; top: 100%; left: 0; right: 1px; padding: 1px 2px 2px 3px;
  background: #fdfefd; border: 1px solid #8b8d8b; border-top: 0;
  box-shadow: 0 2px 5px rgba(0, 0, 0, .45);
}
.menu ul { display: grid; grid-auto-rows: 16px 15px 16px; }
.menu ul + ul { box-shadow: inset 0 1px #a0a2a0; }
.menu li button {
  display: flex; align-items: center; gap: 1px; width: 100%; height: 100%;
}
.menu li svg { width: 13px; height: 13px; }
.glyph { width: 13px; font: 15px/15px "Open Sans", sans-serif; }
.on { background: #bcbebc; box-shadow: inset 0 0 0 1px #a5a7a5; }
kbd { margin-left: auto; width: 26px; font: inherit; }
.sub {
  margin-left: auto; width: 6px; height: 8px; margin-right: 2px;
  background: #222; clip-path: polygon(0 0, 100% 50%, 0 100%);
}
.mouse { position: absolute; left: 88px; top: 48px; filter: drop-shadow(2px 3px 2px rgba(0, 0, 0, .5)); }
.pointer { position: absolute; left: 88px; top: 16px; }
.tip {
  position: absolute; left: 100%; top: 4px; width: 237px; height: 62px;
  padding: 22px 30px 0 12px; border-radius: 7px;
  font: bold 9px/12px "Liberation Sans", sans-serif; color: #fff;
  background: #4e504d; box-shadow: 0 1px 4px rgba(0, 0, 0, .4);
}

.bar {
  display: flex; align-items: center; height: 19px; font-size: 8px; color: #4a4c4a;
  background: #cfd1ce; border: 1px solid #b3b5b3;
}
.browser { position: relative; grid-column: 1; padding: 3px 60px 0 0; }
.browser .bar { gap: 7px; padding-left: 3px; }
.tree { padding-top: 2px; }
.tree li { display: flex; align-items: center; height: 18px; padding-left: 25px; }
.tree .root { padding-left: 11px; gap: 5px; }
.tree li > span {
  flex: 1; display: flex; align-items: center; gap: 4px; height: 14px; padding-left: 1px; background: #c6c8c6;
}
.tree .root > span { color: #fff; background: #7d7f7d; border-left: 2px solid #7f9fd8; }
.tree .pink { border-left: 4px solid #cf9fd4; }
.tree svg { width: 14px; height: 14px; }
.tree span svg:last-of-type { margin-right: 4px; }
.tree .root > svg { width: 10px; height: 10px; }
.open, .none { width: 7px; height: 11px; margin-right: 6px; }
.open { background: #555; clip-path: polygon(0 0, 100% 50%, 0 100%, 0 0, 15% 20%, 15% 80%, 80% 50%, 15% 20%); }

.right { position: relative; grid-column: 3; grid-row: 2 / 4; display: flex; flex-direction: column; padding-bottom: 1px; }
.cube-area { display: flex; justify-content: flex-end; align-items: flex-start; height: 93px; padding: 18px 14px 0 0; }
.cube {
  width: 40px; height: 41px; text-align: center; font: 500 9px/12px Roboto, sans-serif; color: #80868b;
  background: linear-gradient(#e0e2e0, #d3d7d9); border: 1px solid #b9bbb9;
  box-shadow: 0 3px 4px rgba(0, 0, 0, .25);
}
.palette { flex: 1; display: flex; flex-direction: column; background: #dbdddb; border: 1px solid #b9bbb9; }
.palette .bar { gap: 4px; height: 17px; border-width: 0 0 1px; }
.palette .end { margin: 0 3px 0 auto; }
.grip { width: 3px; height: 9px; border-left: 1px solid #999; border-right: 1px solid #bbb; }
.rows { flex: 1; display: grid; grid-auto-rows: 1fr; border-right: 5px solid #8e908e; }
.rows h3 { display: flex; align-items: center; gap: 3px; font-weight: 700; }
.row { display: grid; grid-template-columns: 84px 14px; align-items: center; padding-left: 6px; }
.row svg { width: 13px; height: 13px; }
.row input {
  appearance: none; width: 10px; height: 10px; margin: 0 1px;
  border: 1px solid #777977; border-radius: 2px; background: linear-gradient(#fff, #cfd1cf);
}
.row input:checked {
  background: #d2d4d2 url("data:image/svg+xml,%3Csvg xmlns='http://www.w3.org/2000/svg' viewBox='0 0 8 8'%3E%3Cpath d='M1.500 4l2 3 4-6.500' fill='none' stroke='%23222' stroke-width='1.400'/%3E%3C/svg%3E") center / 8px 8px no-repeat;
}
.palette footer { display: flex; justify-content: flex-end; padding: 4px 6px 3px; background: #d0d2d0; box-shadow: inset 0 1px #b5b7b5; }
.finish { height: 17px; padding: 0 3px; background: #e8eae8; border: 1px solid #b5b7b5; }

.comments { position: relative; grid-column: 1; grid-row: 3; padding: 0 1px 0 18px; gap: 4px; }
.comments svg { margin-left: auto; }

.viewbar {
  position: relative; grid-column: 2; grid-row: 3; justify-self: start;
  display: flex; align-items: center; gap: 4px; margin-left: 100px;
}
.viewbar .flat { gap: 0; }
.viewbar .display { margin-left: 8px; }
.viewbar .caret { margin-left: 0; }
.viewbar svg { width: 14px; height: 14px; }

.timeline {
  display: flex; align-items: center; gap: 8px; height: 25px; padding: 5px 3px 0 7px; background: #c9cbc8;
}
.features { display: flex; align-items: flex-start; margin-left: 5px; }
.features .flat { height: 20px; padding: 0 2px; }
.features .f1 { padding: 0 1px; margin-right: 3px; }
.f1 { border-top: 2px solid #c99ad8; }
.f2 { border-top: 2px solid #5577cc; }
.marker { margin-left: -5px; }
.settings { margin-left: auto; }
```
